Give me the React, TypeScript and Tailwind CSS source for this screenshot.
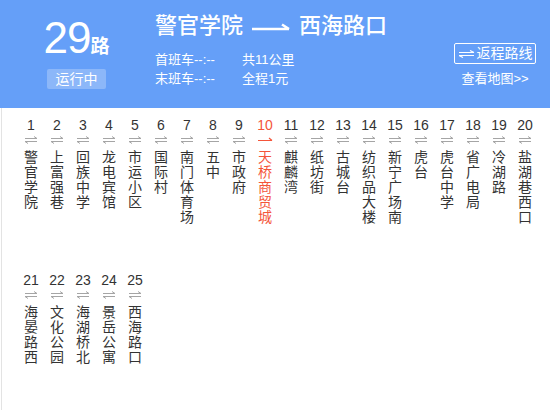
import React from 'react';

const stations = [
  '警官学院', '上富强巷', '回族中学', '龙电宾馆', '市运小区', '国际村', '南门体育场', '五中', '市政府', '天桥商贸城',
  '麒麟湾', '纸坊街', '古城台', '纺织品大楼', '新宁广场南', '虎台', '虎台中学', '省广电局', '冷湖路', '盐湖巷西口',
  '海晏路西', '文化公园', '海湖桥北', '景岳公寓', '西海路口',
];

const current = 10;

function BothWays() {
  return (
    <svg width="14" height="8" viewBox="0 0 14 8" className="block">
      <path d="M1 2.5H13M10 0.5L13 2.5" stroke="#a5a5a5" strokeWidth="1" fill="none" />
      <path d="M1 5.5H13M4 7.5L1 5.5" stroke="#a5a5a5" strokeWidth="1" fill="none" />
    </svg>
  );
}

function Here() {
  return (
    <svg width="16" height="8" viewBox="0 0 16 8" className="block">
      <path d="M1 4.5H15M12 2L15 4.5" stroke="#f4553a" strokeWidth="1.2" fill="none" />
    </svg>
  );
}

function Station({ no, name }: { no: number; name: string }) {
  const on = no === current;
  return (
    <div className={`w-[26px] flex flex-col items-center ${on ? 'text-[#f4553a]' : 'text-[#333]'}`}>
      <div className="text-[14px] leading-[16px] h-[16px]">{no}</div>
      <div className="h-[8px] mt-[3px] mb-[6px] flex items-center">{on ? <Here /> : <BothWays />}</div>
      <div className="text-[14px] leading-[15px] w-[14px] break-all text-center">{name}</div>
    </div>
  );
}

export default function App() {
  return (
    <div className="w-[550px] h-[410px] bg-white overflow-hidden" style={{ fontFamily: '"Liberation Sans", "Noto Sans CJK SC", sans-serif' }}>
      <div className="h-[108px] bg-[#659ff8] text-white flex">
        <div className="w-[155px] flex flex-col items-center pt-[16px] pr-[2px]">
          <div className="flex items-baseline leading-none">
            <span className="text-[44px] tracking-[-1px]">29</span>
            <span className="text-[19px] font-bold">路</span>
          </div>
          <div className="mt-[9px] w-[59px] h-[20px] bg-[#8cb7f9] rounded-[2px] text-[14px] leading-[20px] text-center">运行中</div>
        </div>
        <div className="flex-1 pt-[12px]">
          <div className="flex items-center text-[22px] leading-[28px] font-medium">
            <span>警官学院</span>
            <svg width="38" height="10" viewBox="0 0 38 10" className="mx-[9px] mt-[1px]">
              <path d="M0 7H37M30 2.5L37 7" stroke="white" strokeWidth="2.6" fill="none" />
            </svg>
            <span>西海路口</span>
          </div>
          <div className="flex mt-[10px] text-[13px] leading-[19px]">
            <div className="w-[87px]">
              <div>首班车--:--</div>
              <div>末班车--:--</div>
            </div>
            <div className="flex-1">
              <div>共11公里</div>
              <div>全程1元</div>
            </div>
            <div className="w-[82px] mr-[14px] flex flex-col items-center -mt-[7px]">
              <div className="border border-white rounded-[2px] w-[82px] h-[21px] flex items-center justify-center text-[14px] gap-[2px]">
                <svg width="17" height="8" viewBox="0 0 17 8">
                  <path d="M1 2.5H16M12 0.5L16 2.5" stroke="white" strokeWidth="1.2" fill="none" />
                  <path d="M1 5.5H16M5 7.5L1 5.5" stroke="white" strokeWidth="1.2" fill="none" />
                </svg>
                <span>返程路线</span>
              </div>
              <div className="mt-[5px] text-[13px] whitespace-nowrap">查看地图&gt;&gt;</div>
            </div>
          </div>
        </div>
      </div>
      <div className="ml-px h-[302px] border-l border-[#e3e3e3] pl-[16px] pt-[9px]">
        <div className="grid grid-cols-[repeat(20,26px)] auto-rows-[155px]">
          {stations.map((s, i) => (
            <Station key={i} no={i + 1} name={s} />
          ))}
        </div>
      </div>
    </div>
  );
}
